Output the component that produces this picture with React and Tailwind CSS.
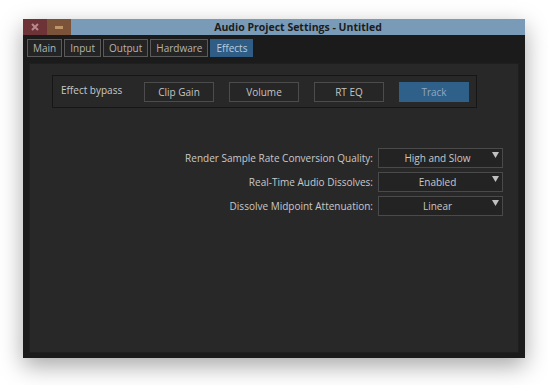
import React from "react";

const Tab = ({ label, active }) => (
  <div
    className={
      active
        ? "h-[18px] px-[5px] flex items-center bg-[#2f5d86] text-[#b7cde0] border border-[#2f5d86]"
        : "h-[18px] px-[5px] flex items-center bg-[#242424] text-[#b4b4b4] border border-[#5a5a5a]"
    }
  >
    {label}
  </div>
);

const Btn = ({ label, active }) => (
  <div
    className={
      active
        ? "w-[70px] h-[20px] flex items-center justify-center bg-[#2f6089] text-[#8ea9c1] border border-[#2f6089]"
        : "w-[70px] h-[20px] flex items-center justify-center bg-[#262626] text-[#c4c4c4] border border-[#4c4c4c]"
    }
  >
    {label}
  </div>
);

const Row = ({ label, value }) => (
  <div className="flex items-center h-[20px]">
    <div className="text-[#c8c8c8] mr-[5px] text-right">{label}</div>
    <div className="relative w-[125px] h-[20px] bg-[#232323] border border-[#4a4a4a] flex items-center justify-center text-[#c8c8c8]">
      <span className="pr-[6px]">{value}</span>
      <svg
        className="absolute right-[3px] top-[3px]"
        width="7"
        height="6"
        viewBox="0 0 7 6"
      >
        <polygon points="0,0 7,0 3.5,6" fill="#c0c0c0" />
      </svg>
    </div>
  </div>
);

export default function App() {
  return (
    <div
      className="w-[548px] h-[385px] bg-white pl-[23px] pt-[19px] overflow-hidden"
      style={{ fontFamily: '"Open Sans", "Noto Sans", sans-serif' }}
    >
      <div className="w-[502px] h-[339px] bg-[#1b1b1b] shadow-[0_8px_22px_rgba(0,0,0,0.35)] flex flex-col text-[10px] leading-none">
        <div className="h-[16px] flex">
          <div className="w-[24px] bg-[#6e3337] flex items-center justify-center">
            <svg width="8" height="8" viewBox="0 0 8 8">
              <path d="M1 1 L7 7 M7 1 L1 7" stroke="#b88a8e" strokeWidth="2" />
            </svg>
          </div>
          <div className="w-[24px] bg-[#7b5338] flex items-center justify-center">
            <div className="w-[8px] h-[3px] bg-[#c0946a]" />
          </div>
          <div className="flex-1 bg-[#7a9bb8] flex items-center justify-center text-[#1c1c1c] font-bold text-[10.5px]">
            Audio Project Settings - Untitled
          </div>
        </div>
        <div className="mt-[4px] pl-[4px] flex gap-[2px]">
          <Tab label="Main" />
          <Tab label="Input" />
          <Tab label="Output" />
          <Tab label="Hardware" />
          <Tab label="Effects" active />
        </div>
        <div className="mt-[6px] mx-[6px] h-[290px] bg-[#282828] border border-[#1f1f1f] flex flex-col">
          <div className="mt-[11px] ml-[22px] w-[425px] h-[33px] border border-[#161616] flex items-center pl-[8px]">
            <div className="w-[83px] text-[#c8c8c8] -mt-[3px]">Effect bypass</div>
            <div className="flex gap-[15px]">
              <Btn label="Clip Gain" />
              <Btn label="Volume" />
              <Btn label="RT EQ" />
              <Btn label="Track" active />
            </div>
          </div>
          <div className="mt-[40px] flex flex-col items-end pr-[15px] gap-[4px]">
            <Row label="Render Sample Rate Conversion Quality:" value="High and Slow" />
            <Row label="Real-Time Audio Dissolves:" value="Enabled" />
            <Row label="Dissolve Midpoint Attenuation:" value="Linear" />
          </div>
        </div>
      </div>
    </div>
  );
}
